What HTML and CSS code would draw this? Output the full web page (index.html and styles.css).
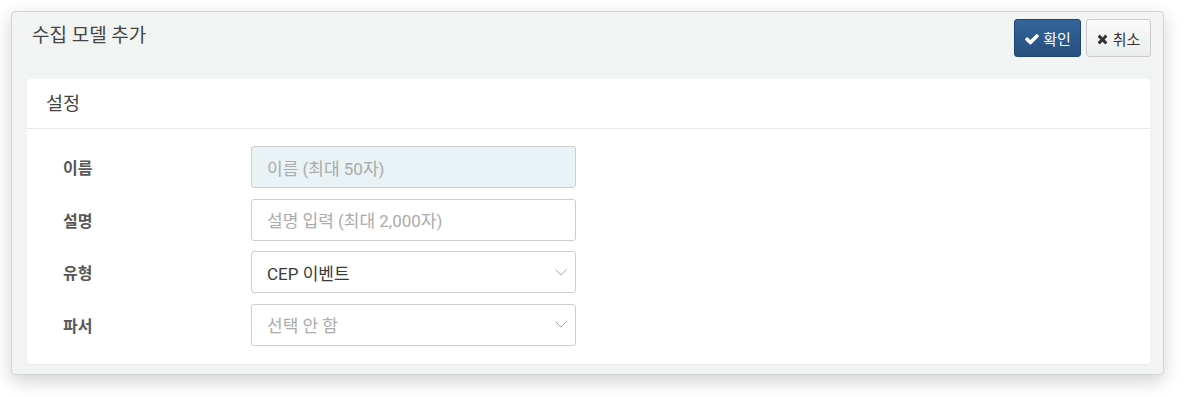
FILE: index.html
```html
<!DOCTYPE html>
<html lang="ko">
<head>
<meta charset="utf-8">
<link rel="stylesheet" href="styles.css">
</head>
<body>
<div class="panel">
  <div class="panel-head">
    <h1 class="title">수집 모델 추가</h1>
    <div class="actions">
      <button class="btn btn-primary">
        <svg class="ico-check" viewBox="0 0 1792 1792"><path fill="currentColor" d="M1671 566q0 40-28 68l-724 724-136 136q-28 28-68 28t-68-28l-136-136-362-362q-28-28-28-68t28-68l136-136q28-28 68-28t68 28l294 295 656-657q28-28 68-28t68 28l136 136q28 28 28 68z"/></svg>확인
      </button>
      <button class="btn btn-default">
        <svg class="ico-times" viewBox="0 0 1408 1792"><path fill="currentColor" d="M1298 1322q0 40-28 68l-136 136q-28 28-68 28t-68-28l-294-294-294 294q-28 28-68 28t-68-28l-136-136q-28-28-28-68t28-68l294-294-294-294q-28-28-28-68t28-68l136-136q28-28 68-28t68 28l294 294 294-294q28-28 68-28t68 28l136 136q28 28 28 68t-28 68l-294 294 294 294q28 28 28 68z"/></svg>취소
      </button>
    </div>
  </div>
  <div class="card">
    <div class="card-head">설정</div>
    <div class="form">
      <div class="row">
        <label class="label">이름</label>
        <div class="field field-disabled"><span class="ph">이름 (최대 50자)</span></div>
      </div>
      <div class="row">
        <label class="label">설명</label>
        <div class="field"><span class="ph">설명 입력 (최대 2,000자)</span></div>
      </div>
      <div class="row">
        <label class="label">유형</label>
        <div class="field select"><span class="val">CEP 이벤트</span>
          <svg class="chev" viewBox="0 0 12 7"><path d="M0.5 0.5 L6 6 L11.5 0.5" fill="none" stroke="#a8a8a8" stroke-width="1"/></svg>
        </div>
      </div>
      <div class="row">
        <label class="label">파서</label>
        <div class="field select"><span class="ph">선택 안 함</span>
          <svg class="chev" viewBox="0 0 12 7"><path d="M0.5 0.5 L6 6 L11.5 0.5" fill="none" stroke="#a8a8a8" stroke-width="1"/></svg>
        </div>
      </div>
    </div>
  </div>
</div>
</body>
</html>
```

FILE: styles.css
```css
* { box-sizing: border-box; }
html, body { margin: 0; padding: 0; background: #ffffff; }
html { min-height: 397px; }
body {
  font-family: Roboto, "Noto Sans CJK KR", sans-serif;
  color: #333;
  padding: 11px 0 0 11px;
  min-height: 397px;
}
.panel {
  width: 1153px;
  height: 364px;
  background: #f2f3f3;
  border: 1px solid #d3d4d4;
  border-radius: 4px;
  box-shadow: 0 6px 18px rgba(0, 0, 0, 0.18);
  padding: 7px 12px 0 15px;
}
.panel-head {
  display: flex;
  align-items: center;
  justify-content: space-between;
  height: 38px;
  margin-bottom: 22px;
}
.title {
  margin: -5px 0 0 5px;
  font-size: 19px;
  font-weight: 400;
  color: #444;
  line-height: 1;
}
.actions { display: flex; gap: 5px; }
.btn {
  height: 38px;
  display: inline-flex;
  align-items: center;
  justify-content: center;
  font-family: Roboto, "Noto Sans CJK KR", sans-serif;
  font-size: 15px;
  border-radius: 3px;
  padding: 0;
  cursor: pointer;
}
.btn-primary {
  width: 67px;
  color: #fff;
  background: linear-gradient(#34649a, #26507f);
  border: 1px solid #1f4470;
}
.btn-default {
  width: 65px;
  color: #333;
  background: linear-gradient(#fafafa, #eceded);
  border: 1px solid #cbcbcb;
}
.ico-check { width: 16px; height: 16px; margin-right: 3px; margin-top: 1px; }
.ico-times { width: 11px; height: 14px; margin-right: 5px; margin-top: 1px; color: #333; }
.card {
  width: 1123px;
  background: #fff;
  border-radius: 4px;
  box-shadow: 0 1px 1px rgba(0,0,0,0.04);
}
.card-head {
  height: 50px;
  border-bottom: 1px solid #e8e9e9;
  padding: 0 0 3px 19px;
  display: flex;
  align-items: center;
  font-size: 18.5px;
  color: #444;
}
.form {
  display: flex;
  flex-direction: column;
  gap: 10.5px;
  padding: 17px 0 18px 0;
}
.row {
  display: grid;
  grid-template-columns: 224px 325px;
  align-items: center;
}
.label {
  padding-left: 36px;
  font-size: 16px;
  font-weight: 700;
  color: #585858;
}
.field {
  height: 42px;
  border: 1px solid #cdcdcd;
  border-radius: 3px;
  background: #fff;
  display: flex;
  align-items: center;
  justify-content: space-between;
  padding: 0 8px 0 15px;
  font-size: 17px;
}
.field-disabled { background: #e9f2f5; }
.ph { color: #ababab; }
.val { color: #3a3a3a; }
.chev { width: 12px; height: 7px; }
```
